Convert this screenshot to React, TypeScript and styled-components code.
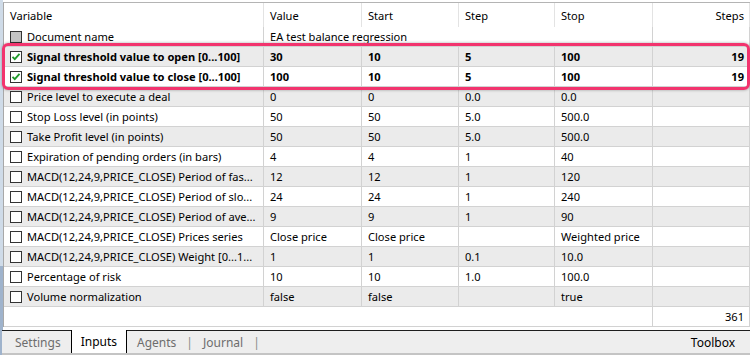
import React from "react";
import styled, { createGlobalStyle, css } from "styled-components";

const Global = createGlobalStyle`
  html, body { margin: 0; padding: 0; background: #f0f0f0; }
  body { font-family: "Noto Sans", "Open Sans", sans-serif; font-size: 11.1px; color: #000; }
  * { box-sizing: border-box; }
`;

const COLS = "260px 98px 97px 96px 98px 97px";

const Page = styled.div`
  width: 750px;
  height: 355px;
  display: flex;
  overflow: hidden;
  background: #f0f0f0;
`;

const SideStrip = styled.div`
  width: 3px;
  flex: none;
  background: linear-gradient(#cfdbe8 0 75%, #9fb3cc 75% 100%);
`;

const Main = styled.div`
  flex: 1;
  display: flex;
  flex-direction: column;
  padding-top: 2px;
  background: #fff;
`;

const Table = styled.div`
  border-top: 1px solid #b4b4b4;
  border-left: 1px solid #a8a8a8;
  background: #fff;
`;

const HeaderRow = styled.div`
  display: grid;
  grid-template-columns: ${COLS};
  height: 24px;
`;

const HeaderCell = styled.div<{ $right?: boolean }>`
  display: flex;
  align-items: center;
  justify-content: ${(p) => (p.$right ? "flex-end" : "flex-start")};
  padding: ${(p) => (p.$right ? "0 5px 0 0" : "0 0 0 6px")};
  border-right: 1px solid #e3e3e3;
  white-space: nowrap;
`;

const Row = styled.div<{ $alt?: boolean }>`
  display: grid;
  grid-template-columns: ${COLS};
  height: 20px;
  background: ${(p) => (p.$alt ? "#ebebeb" : "#fff")};
`;

const Cell = styled.div<{ $right?: boolean; $bold?: boolean; $span?: number }>`
  display: flex;
  align-items: center;
  justify-content: ${(p) => (p.$right ? "flex-end" : "flex-start")};
  padding: ${(p) => (p.$right ? "0 5px 0 0" : "0 0 0 6px")};
  border-right: 1px solid #d2d2d2;
  border-bottom: 1px solid #d2d2d2;
  white-space: nowrap;
  overflow: hidden;
  font-weight: ${(p) => (p.$bold ? 700 : 400)};
  ${(p) => p.$span && css`grid-column: span ${p.$span};`}
`;

const NameCell = styled(Cell)`
  padding-left: 6px;
  gap: 5px;
`;

const Box = styled.span<{ $disabled?: boolean }>`
  width: 12px;
  height: 12px;
  flex: none;
  border: 1px solid #333;
  background: ${(p) => (p.$disabled ? "#c4c4c4" : "#fff")};
  display: flex;
  align-items: center;
  justify-content: center;
`;

const Group = styled.div`
  position: relative;
  &::after {
    content: "";
    position: absolute;
    top: -4px;
    bottom: -3px;
    left: -2px;
    right: 0px;
    border: 3px solid #f2346e;
    border-radius: 6px;
    box-shadow: 0 0 3px rgba(0, 0, 0, 0.35);
    pointer-events: none;
  }
`;

const Spacer = styled.div`
  flex: 1;
  background: #fff;
`;

const TabBar = styled.div`
  height: 25px;
  flex: none;
  display: flex;
  align-items: stretch;
  background: #eeeeee;
  border-top: 1px solid #1e1e1e;
  border-bottom: 2px solid #c4c4c4;
  padding-left: 3px;
  margin-left: -1px;
  font-size: 12px;
`;

const Tab = styled.div<{ $active?: boolean }>`
  display: flex;
  align-items: center;
  padding: 0 10px;
  color: ${(p) => (p.$active ? "#000" : "#6d6d6d")};
  ${(p) =>
    p.$active &&
    css`
      background: #fff;
      border-left: 1px solid #000;
      border-right: 1px solid #000;
      padding: 0 9px;
      margin-top: -1px;
    `}
`;

const Sep = styled.div`
  display: flex;
  align-items: center;
  color: #8a8a8a;
`;

const Toolbox = styled.div`
  margin-left: auto;
  display: flex;
  align-items: center;
  padding-right: 15px;
`;

type R = {
  name: string;
  v: string[];
  steps?: string;
  checked?: boolean;
  bold?: boolean;
};

const Check = () => (
  <svg width="10" height="10" viewBox="0 0 10 10">
    <path d="M1.5 4.8 L3.8 7.2 L8.5 1.8" stroke="#1f9a2a" strokeWidth="1.8" fill="none" />
  </svg>
);

const rows: R[] = [
  { name: "Price level to execute a deal", v: ["0", "0", "0.0", "0.0"] },
  { name: "Stop Loss level (in points)", v: ["50", "50", "5.0", "500.0"] },
  { name: "Take Profit level (in points)", v: ["50", "50", "5.0", "500.0"] },
  { name: "Expiration of pending orders (in bars)", v: ["4", "4", "1", "40"] },
  { name: "MACD(12,24,9,PRICE_CLOSE) Period of fas...", v: ["12", "12", "1", "120"] },
  { name: "MACD(12,24,9,PRICE_CLOSE) Period of slo...", v: ["24", "24", "1", "240"] },
  { name: "MACD(12,24,9,PRICE_CLOSE) Period of ave...", v: ["9", "9", "1", "90"] },
  { name: "MACD(12,24,9,PRICE_CLOSE) Prices series", v: ["Close price", "Close price", "", "Weighted price"] },
  { name: "MACD(12,24,9,PRICE_CLOSE) Weight [0...1...", v: ["1", "1", "0.1", "10.0"] },
  { name: "Percentage of risk", v: ["10", "10", "1.0", "100.0"] },
  { name: "Volume normalization", v: ["false", "false", "", "true"] },
];

const highlighted: R[] = [
  { name: "Signal threshold value to open [0...100]", v: ["30", "10", "5", "100"], steps: "19", checked: true, bold: true },
  { name: "Signal threshold value to close [0...100]", v: ["100", "10", "5", "100"], steps: "19", checked: true, bold: true },
];

const DataRow = ({ r, alt }: { r: R; alt: boolean }) => (
  <Row $alt={alt}>
    <NameCell $bold={r.bold}>
      <Box>{r.checked && <Check />}</Box>
      {r.name}
    </NameCell>
    {r.v.map((x, i) => (
      <Cell key={i} $bold={r.bold}>
        {x}
      </Cell>
    ))}
    <Cell $right $bold={r.bold}>
      {r.steps ?? ""}
    </Cell>
  </Row>
);

export default function App() {
  return (
    <Page>
      <Global />
      <SideStrip />
      <Main>
        <Table>
          <HeaderRow>
            <HeaderCell>Variable</HeaderCell>
            <HeaderCell>Value</HeaderCell>
            <HeaderCell>Start</HeaderCell>
            <HeaderCell>Step</HeaderCell>
            <HeaderCell>Stop</HeaderCell>
            <HeaderCell $right>Steps</HeaderCell>
          </HeaderRow>
          <Row>
            <NameCell>
              <Box $disabled />
              Document name
            </NameCell>
            <Cell $span={4}>EA test balance regression</Cell>
            <Cell $right />
          </Row>
          <Group>
            {highlighted.map((r, i) => (
              <DataRow key={i} r={r} alt={i % 2 === 0} />
            ))}
          </Group>
          {rows.map((r, i) => (
            <DataRow key={i} r={r} alt={i % 2 === 0} />
          ))}
          <Row>
            <Cell $span={5} />
            <Cell $right>361</Cell>
          </Row>
        </Table>
        <Spacer />
        <TabBar>
          <Tab>Settings</Tab>
          <Tab $active>Inputs</Tab>
          <Tab>Agents</Tab>
          <Sep>|</Sep>
          <Tab>Journal</Tab>
          <Sep>|</Sep>
          <Toolbox>Toolbox</Toolbox>
        </TabBar>
      </Main>
    </Page>
  );
}
